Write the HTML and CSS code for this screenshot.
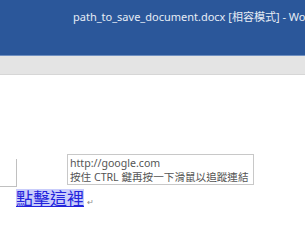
FILE: index.html
```html
<!DOCTYPE html>
<html lang="zh-Hant">
<head>
<meta charset="utf-8">
<link rel="stylesheet" href="styles.css">
</head>
<body>
<header class="titlebar">
  <div class="title">path_to_save_document.docx [相容模式] - Word</div>
</header>
<div class="ribbon"></div>
<main class="doc">
  <div class="corner"></div>
  <p class="para"><a class="link" href="#">點擊這裡</a><span class="mark">↵</span></p>
  <div class="tooltip">
    <div class="tip-line">http://google.com</div>
    <div class="tip-line">按住 CTRL 鍵再按一下滑鼠以追蹤連結</div>
  </div>
</main>
</body>
</html>
```
FILE: styles.css
```css
html, body {
  margin: 0;
  padding: 0;
  width: 305px;
  height: 229px;
  overflow: hidden;
  background: #ffffff;
  font-family: "Noto Sans", "Noto Sans CJK TC", sans-serif;
}
.titlebar {
  height: 55px;
  background: #2b579a;
  border-bottom: 1px solid #6f8fc0;
  overflow: hidden;
}
.title {
  padding: 9px 0 0 73px;
  font-size: 11px;
  line-height: 16px;
  color: #e6ecf5;
  white-space: nowrap;
}
.ribbon {
  height: 18px;
  background: #e4e4e4;
  border-bottom: 1px solid #d6d6d6;
}
.doc {
  position: relative;
  height: 70px;
  padding-top: 84px;
}
.corner {
  width: 16px;
  height: 27px;
  border-right: 1px solid #c0c0c0;
  border-bottom: 1px solid #c0c0c0;
}
.para {
  margin: 2px 0 0 16px;
  display: flex;
  align-items: flex-end;
  line-height: 18px;
}
.link {
  font-family: "Noto Sans CJK TC", sans-serif;
  font-size: 17px;
  color: #2323dc;
  background: #c9cdfb;
  text-decoration: underline;
  text-underline-offset: 1px;
}
.mark {
  font-size: 8px;
  color: #888;
  margin-left: 3px;
  line-height: 10px;
}
.tooltip {
  position: absolute;
  left: 67px;
  top: 79px;
  width: 181px;
  height: 28px;
  padding: 1px 2px 0 2px;
  border: 1px solid #c8c8c8;
  background: #fff;
  font-size: 10.6px;
  color: #555;
  white-space: nowrap;
}
.tip-line {
  height: 14px;
  line-height: 14px;
}
```
